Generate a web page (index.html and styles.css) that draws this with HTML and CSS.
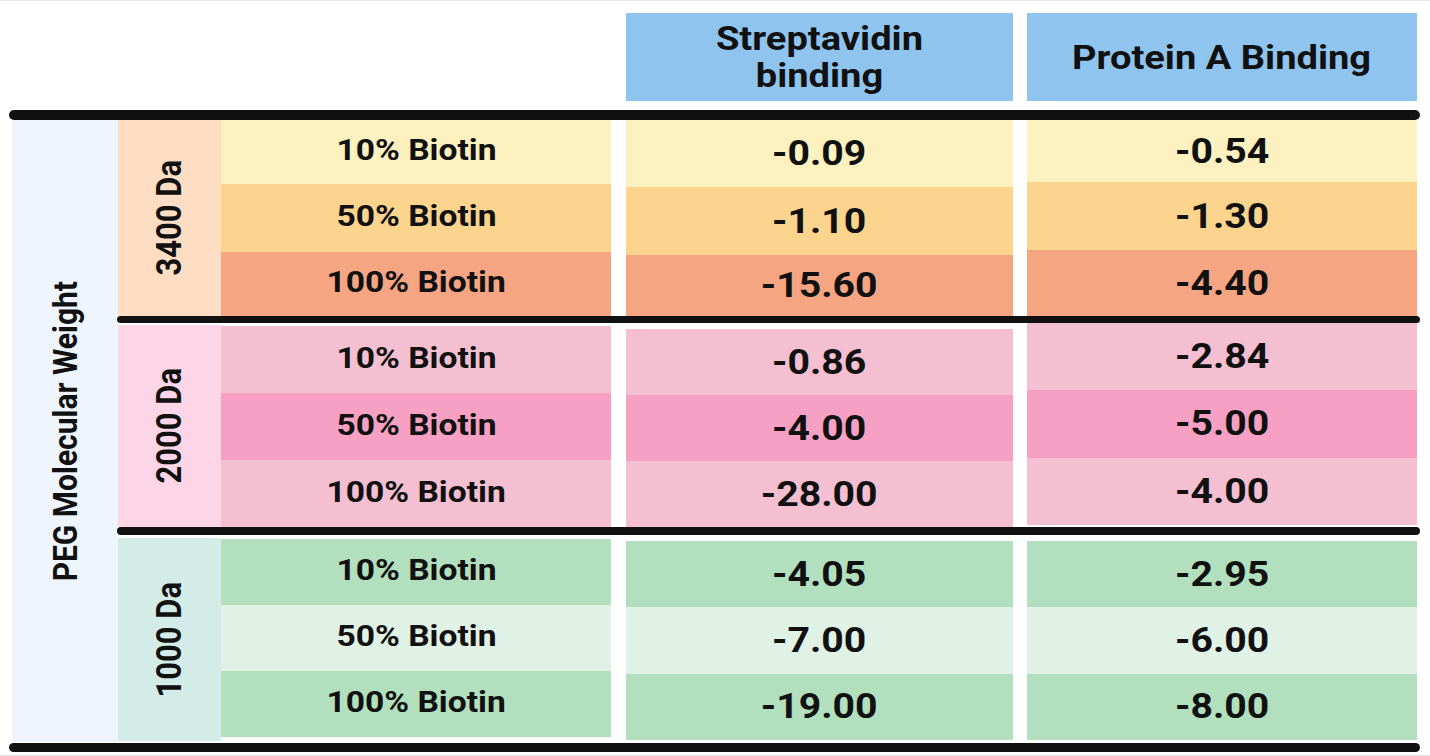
FILE: index.html
```html
<!DOCTYPE html>
<html lang="en">
<head>
<meta charset="utf-8">
<title>PEG Biotin Binding Table</title>
<link rel="stylesheet" href="styles.css">
</head>
<body>
<div class="frame">
  <div class="head">
    <div class="hcell h-strept"><span class="t">Streptavidin<br>binding</span></div>
    <div class="hcell h-protein"><span class="t">Protein A Binding</span></div>
  </div>
  <div class="rule rule-full"></div>
  <div class="body">
    <div class="axis"><span class="vt">PEG Molecular Weight</span></div>
    <div class="groups">
      <div class="group g1">
        <div class="da da-peach"><span class="vt">3400 Da</span></div>
        <div class="col labels">
          <div class="cell lab c-yellow"><span class="t">10% Biotin</span></div>
          <div class="cell lab c-orange"><span class="t">50% Biotin</span></div>
          <div class="cell lab c-salmon"><span class="t">100% Biotin</span></div>
        </div>
        <div class="col strept">
          <div class="cell num c-yellow r-s1"><span class="t">-0.09</span></div>
          <div class="cell num c-orange r-s2"><span class="t">-1.10</span></div>
          <div class="cell num c-salmon r-s3"><span class="t">-15.60</span></div>
        </div>
        <div class="col protein">
          <div class="cell num c-yellow r-p1"><span class="t">-0.54</span></div>
          <div class="cell num c-orange r-p2"><span class="t">-1.30</span></div>
          <div class="cell num c-salmon r-p3"><span class="t">-4.40</span></div>
        </div>
      </div>
      <div class="rule rule-short rs1"></div>
      <div class="group g2">
        <div class="da da-pink"><span class="vt">2000 Da</span></div>
        <div class="col labels">
          <div class="cell lab c-pink"><span class="t">10% Biotin</span></div>
          <div class="cell lab c-pinkmid"><span class="t">50% Biotin</span></div>
          <div class="cell lab c-pink"><span class="t">100% Biotin</span></div>
        </div>
        <div class="col strept">
          <div class="cell num c-pink"><span class="t">-0.86</span></div>
          <div class="cell num c-pinkmid"><span class="t">-4.00</span></div>
          <div class="cell num c-pink"><span class="t">-28.00</span></div>
        </div>
        <div class="col protein">
          <div class="cell num c-pink"><span class="t">-2.84</span></div>
          <div class="cell num c-pinkmid"><span class="t">-5.00</span></div>
          <div class="cell num c-pink"><span class="t">-4.00</span></div>
        </div>
      </div>
      <div class="rule rule-short rs2"></div>
      <div class="group g3">
        <div class="da da-mint"><span class="vt">1000 Da</span></div>
        <div class="col labels">
          <div class="cell lab c-green"><span class="t">10% Biotin</span></div>
          <div class="cell lab c-greenlt"><span class="t">50% Biotin</span></div>
          <div class="cell lab c-green"><span class="t">100% Biotin</span></div>
        </div>
        <div class="col strept">
          <div class="cell num c-green"><span class="t">-4.05</span></div>
          <div class="cell num c-greenlt"><span class="t">-7.00</span></div>
          <div class="cell num c-green"><span class="t">-19.00</span></div>
        </div>
        <div class="col protein">
          <div class="cell num c-green"><span class="t">-2.95</span></div>
          <div class="cell num c-greenlt"><span class="t">-6.00</span></div>
          <div class="cell num c-green"><span class="t">-8.00</span></div>
        </div>
      </div>
    </div>
  </div>
  <div class="rule rule-full rule-bottom"></div>
</div>
</body>
</html>
```
FILE: styles.css
```css
html, body {
  margin: 0;
  padding: 0;
  background: #ffffff;
}

body {
  font-family: Roboto, "Liberation Sans", Arial, sans-serif;
  font-weight: 700;
  color: #111111;
}

.frame {
  width: 1430px;
  height: 756px;
  box-sizing: border-box;
  border-top: 1px solid #e6e6e9;
  border-bottom: 1px solid #e6e6e9;
  overflow: hidden;
}

.t {
  display: inline-block;
  transform: scaleX(1.12);
  white-space: nowrap;
}

/* header */
.head {
  height: 109px;
  box-sizing: border-box;
  padding-top: 12px;
  padding-left: 626px;
  display: flex;
  gap: 14px;
}

.hcell {
  height: 88px;
  background: #8ec4ee;
  display: flex;
  align-items: center;
  justify-content: center;
  text-align: center;
  font-size: 34px;
  line-height: 37px;
}

.h-strept { width: 387px; }
.h-protein { width: 390px; }

/* rules */
.rule {
  background: #111111;
  border-radius: 5px;
}

.rule-full {
  margin-left: 9px;
  width: 1411px;
  height: 10px;
}

.rule-bottom {
  margin-top: 1px;
  height: 9px;
}

.rule-short {
  margin-left: -1px;
  width: 1303px;
  border-radius: 4px;
}

.rs1 { height: 7px; }
.rs2 { height: 8px; }

/* body */
.body {
  display: flex;
  height: 622px;
}

.axis {
  margin-left: 12px;
  width: 106px;
  background: #eef5fd;
  display: flex;
  align-items: center;
  justify-content: center;
}

.vt {
  writing-mode: vertical-rl;
  transform: rotate(180deg) scaleX(1.12);
  font-size: 30px;
  white-space: nowrap;
}

.groups {
  width: 1302px;
  display: flex;
  flex-direction: column;
}

.group {
  display: flex;
}

.g1 { height: 196px; }
.g2 { height: 204px; }
.g3 { height: 207px; }

.da {
  width: 103px;
  display: flex;
  align-items: center;
  justify-content: center;
}

.da .vt { font-size: 31px; }

.col {
  display: flex;
  flex-direction: column;
}

.labels { width: 390px; margin-right: 15px; }
.strept { width: 387px; margin-right: 14px; }
.protein { width: 390px; }

.cell {
  flex: 1;
  box-sizing: border-box;
  display: flex;
  align-items: center;
  justify-content: center;
}

.lab {
  font-size: 30px;
  padding-bottom: 5px;
}

.num {
  font-size: 35px;
}

/* group 1 uneven row splits */
.g1 .r-s1 { flex: 0 0 67px; }
.g1 .r-s2 { flex: 0 0 68px; }
.g1 .r-s3 { flex: 1; }
.g1 .r-p1 { flex: 0 0 62px; }
.g1 .r-p2 { flex: 0 0 68px; }
.g1 .r-p3 { flex: 1; }
.g1 .labels .cell:nth-child(1) { flex: 0 0 64px; }
.g1 .labels .cell:nth-child(2) { flex: 0 0 68px; }

/* group 2 offsets */
.g2 .da { margin-top: 2px; }
.g2 .labels { margin-top: 3px; }
.g2 .strept { margin-top: 6px; }
.g2 .protein { margin-bottom: 2px; }

/* group 3 offsets */
.g3 .da { margin-top: 3px; margin-bottom: 1px; }
.g3 .labels { margin-top: 4px; margin-bottom: 5px; }
.g3 .strept { margin-top: 6px; margin-bottom: 2px; }
.g3 .protein { margin-top: 6px; margin-bottom: 2px; }

/* colours */
.da-peach { background: #fddec5; }
.da-pink { background: #fcd6e7; }
.da-mint { background: #d3ece7; }

.c-yellow { background: #fcf1bf; }
.c-orange { background: #fdd48d; }
.c-salmon { background: #f6a582; }
.c-pink { background: #f5bfd2; }
.c-pinkmid { background: #f6a1c3; }
.c-green { background: #b2e0be; }
.c-greenlt { background: #e0f2e6; }
```
